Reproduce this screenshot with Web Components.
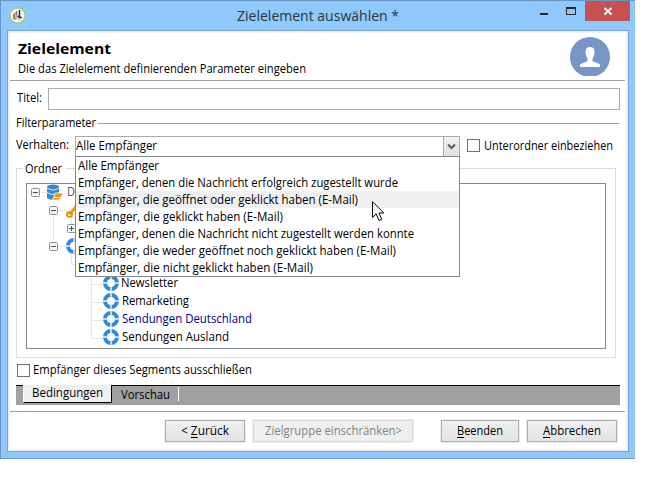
<!DOCTYPE html>
<html lang="de">
<head>
<meta charset="utf-8">
<title>Zielelement auswählen</title>
<style>
body{margin:0;background:#fff;font:12px/16px "Open Sans","Noto Sans",sans-serif;color:#000;overflow:hidden}
</style>
</head>
<body>
<wizard-window></wizard-window>
<script>
const define=(name,html,setup)=>{
  const t=document.createElement('template');t.innerHTML=html;
  customElements.define(name,class extends HTMLElement{
    connectedCallback(){
      if(this.shadowRoot)return;
      this.attachShadow({mode:'open'}).append(t.content.cloneNode(true));
      if(setup)setup(this,this.shadowRoot);
    }
  });
};

/* Text run condensed so that its advance equals the "w" attribute. */
define('fit-text',`<style>:host{display:block;flex:none;white-space:nowrap;height:16px}span{display:inline-block;white-space:pre;transform-origin:0 0}</style><span><slot></slot></span>`,(el,root)=>{
  const w=+el.getAttribute('w'),s=root.querySelector('span');
  el.style.width=w+'px';
  s.style.transform='scaleX('+w/s.getBoundingClientRect().width+')';
});

define('check-box',`<style>:host{display:flex;align-items:center;flex:none}i{box-sizing:border-box;width:13px;height:13px;border:1px solid #707070;background:#fff;margin-right:var(--gap,4px)}</style><i></i><slot></slot>`);

define('push-button',`<style>:host{display:block;flex:none;padding:1px;background:#f0f0f0}
button{all:unset;box-sizing:border-box;display:flex;justify-content:center;align-items:center;width:var(--w);height:22px;border:1px solid #acacac;background:linear-gradient(#f0f0f0,#e4e4e4)}
:host([disabled]) button{border-color:#d9d9d9;background:#efefef;color:#838383}</style><button><slot></slot></button>`);

define('ring-icon',`<style>:host{display:block;width:16px;height:16px}</style><svg width="16" height="16" style="display:block"><circle cx="8" cy="8" r="6" fill="none" stroke="#328ad6" stroke-width="4"/><path d="M8 0V4M8 12V16M0 8H4M12 8H16" stroke="#b6d7f1" stroke-width="2"/></svg>`);

define('tree-toggle',`<style>:host{display:block;width:9px;height:9px}</style><svg width="9" height="9" style="display:block"><rect x=".5" y=".5" width="8" height="8" rx="1" fill="#f5f5f5" stroke="#8f8f8f"/><path d="M2 4.5H7" stroke="#3b5580"/><path class="v" d="M4.500 2V7" stroke="#3b5580"/></svg>`,(el,r)=>{if(!el.hasAttribute('plus'))r.querySelector('.v').remove();});

define('title-bar',`<style>:host{display:grid;grid-template-columns:1fr auto 1fr;height:29px;color:#2b3640}
.logo{padding:6px 0 0 8px}fit-text{font-size:15px;line-height:20px;height:20px;padding-top:4px}
.ctl{display:flex;justify-content:flex-end;margin-right:5px}.close{background:#c75050;height:20px}svg{display:block}</style>
<div class="logo"><svg width="17" height="17"><circle cx="8.500" cy="8.500" r="7.600" fill="#f5f5ef" stroke="#a5bd4c"/><path d="M3.800 8L6 6V13L3.800 11.500Z" fill="#9b9b9b"/><path d="M6 5L8.500 3.500V12L6 13.500Z" fill="#b9b9b9"/><path d="M5.300 6V12.500M7.500 4.500V8.500" stroke="#777"/><path d="M10.500 3V10.500L8.500 9M10.500 10.500H13" fill="none" stroke="#333" stroke-width="1.500"/><path d="M9 12.500L12.500 11" stroke="#aaa"/></svg></div>
<fit-text w="162">Zielelement auswählen *</fit-text>
<div class="ctl"><svg width="52" height="20"><path d="M7 13H15" stroke="#2a2a2a" stroke-width="2"/><path d="M33 6H43V14H33ZM34 8V13H42V8Z" fill="#2a2a2a" fill-rule="evenodd"/></svg>
<div class="close"><svg width="45" height="20"><path d="M19.500 7L26.500 13.500M26.500 7L19.500 13.500" stroke="#fff" stroke-width="1.900"/></svg></div></div>`);

define('page-header',`<style>:host{display:flex;justify-content:space-between;height:47px;border-bottom:1px solid #a0a0a0;padding:0 15px 0 8px;margin-right:1px}
.t{padding-top:5px}.h{font-size:15px;font-weight:bold;line-height:20px;height:20px}svg{display:block;margin-top:4px}</style>
<div class="t"><fit-text class="h" w="93">Zielelement</fit-text><fit-text w="288" style="margin-top:3px">Die das Zielelement definierenden Parameter eingeben</fit-text></div>
<svg width="40" height="39"><circle cx="20" cy="20" r="20" fill="#7596c6"/><path d="M15.500 15C15.500 11.500 17 10 20 10S24.500 11.500 24.500 15C24.500 18 23.500 20 22.500 21.500V24C24 25.500 29.500 26 30 28V30H10V28C10.500 26 16 25.500 17.500 24V21.500C16.500 20 15.500 18 15.500 15Z" fill="#fff"/></svg>`);

define('combo-box',`<style>:host{display:flex;box-sizing:border-box;width:385px;height:21px;border:1px solid #aaa;position:relative;background:#fff;flex:none}
.v{flex:1;padding:1px 0 0 0}.b{width:15px;border-left:1px solid #aaa;background:linear-gradient(#f1f1f1,#e1e1e1);display:flex;align-items:center;justify-content:center}
.list{position:absolute;z-index:2;left:-1px;top:19px;width:383px;border:1px solid #828790;background:#fff}
.cursor{position:absolute;z-index:3;left:296px;top:64px}</style>
<div class="v"><slot name="value"></slot></div><div class="b"><svg width="9" height="7"><path d="M1 1.500L4.500 5L8 1.500" fill="none" stroke="#606060" stroke-width="2.200"/></svg></div>
<div class="list"><slot></slot></div>
<svg class="cursor" width="13" height="21"><path d="M.5 .7V16.500L4.200 12.900L7 19.500L9.700 18.300L7 12H11.800Z" fill="#fff" stroke="#000"/></svg>`);

define('list-option',`<style>:host{display:block;box-sizing:border-box;height:17px;padding:1px 0 0 2px}:host([active]){background:#f0f0f0}</style><slot></slot>`);

define('tree-row',`<style>:host{display:flex;align-items:center;height:18px;gap:var(--gap,3px);padding-left:var(--indent,76px)}</style><slot></slot>`);

define('folder-tree',`<style>:host{display:block;box-sizing:border-box;height:166px;border:1px solid #828790;background:#fff}
.body{display:grid}.lines,.rows{grid-area:1/1}.rows{margin-top:-1px}svg{display:block}</style>
<div class="body"><svg class="lines" width="120" height="164"><path d="M26.500 17V62M14 8.500H21M31 26.500H39M44.500 35V44M31 62.500H39M44.500 70V80.500H60M64.500 86V154.500M65 100.500H76M65 118.500H76M65 136.500H76M65 154.500H76" fill="none" stroke="#e7e7e7"/></svg>
<div class="rows">
<tree-row style="--indent:4px;--gap:3px"><tree-toggle></tree-toggle><svg width="17" height="17" style="margin-left:4px"><path d="M0 3V14Q6 18 12 14V3" fill="#328ad6"/><ellipse cx="6" cy="3" rx="6" ry="2.500" fill="#328ad6"/><path d="M0 4Q6 8 12 4M0 8.500Q6 12.500 12 8.500" fill="none" stroke="#d8eaf7"/><path d="M8 9H15Q17 10 15 11L12 16H6Q4 15 7 13Z" fill="#f4960d" stroke="#fff" stroke-width=".7"/><path d="M7 13.500H12" stroke="#fff"/></svg><fit-text w="8" style="color:#555">D</fit-text></tree-row>
<tree-row style="--indent:22px;--gap:8px"><tree-toggle></tree-toggle><svg width="16" height="16"><path d="M3 12.500L11 4" stroke="#f4960d" stroke-width="3"/><circle cx="3.500" cy="12.500" r="2.600" fill="none" stroke="#f4960d" stroke-width="2"/><circle cx="11.500" cy="4" r="3" fill="#f4960d"/></svg></tree-row>
<tree-row style="--indent:40px"><tree-toggle plus></tree-toggle></tree-row>
<tree-row style="--indent:22px;--gap:8px"><tree-toggle></tree-toggle><ring-icon></ring-icon></tree-row>
<tree-row style="height:19px"></tree-row>
<tree-row style="--gap:2px"><ring-icon></ring-icon><fit-text w="57">Newsletter</fit-text></tree-row>
<tree-row><ring-icon></ring-icon><fit-text w="67">Remarketing</fit-text></tree-row>
<tree-row><ring-icon></ring-icon><fit-text w="130" style="color:#00008b">Sendungen Deutschland</fit-text></tree-row>
<tree-row><ring-icon></ring-icon><fit-text w="107">Sendungen Ausland</fit-text></tree-row>
</div></div>`);

define('folder-group',`<style>:host{display:block;box-sizing:border-box;width:600px;height:190px;border:1px solid #dcdcdc;padding:0 9px}
.legend{background:#fff;width:fit-content;padding:0 4px 0 2px;margin:-8px 0 6px -3px;height:16px}</style><div class="legend"><fit-text w="37">Ordner</fit-text></div><slot></slot>`);

define('tab-strip',`<style>:host{display:flex;box-sizing:border-box;width:604px;height:20px;background:#a0a0a0;border-top:1px solid #000;padding-left:7px}
.a{box-sizing:border-box;width:89px;height:18px;margin-top:-1px;background:#f0f0f0;border-left:1px solid #fff;border-right:1px solid #000;border-bottom:1px solid #000;padding-left:8px}
.b{width:66px;height:14px;margin-top:1px;border-right:1px solid #fff;display:flex;padding-left:0}.b fit-text{margin:0 0 0 9px}</style>
<div class="a"><fit-text w="71">Bedingungen</fit-text></div><div class="b"><fit-text w="49">Vorschau</fit-text></div>`);

define('wizard-window',`<style>
:host{display:block;box-sizing:border-box;width:635px;height:459px;background:#8fc8fa;border:solid #6895c2;border-width:1px 0 1px 1px}
.frame{box-sizing:border-box;width:622px;height:422px;margin-left:6px;border:1px solid #75a5d2;background:#f0f0f0;padding:2px}
.page{height:416px;width:616px;background:#fff}
.row{display:flex}.input{box-sizing:border-box;width:572px;height:22px;border:1px solid #abadb3;background:#fff}
.body{padding-left:6px;height:330px}.rule{flex:1;height:1px;background:#a0a0a0;margin-top:8px}
.foot{display:flex;border-top:1px solid #a0a0a0;margin-right:1px;padding:7px 0 0 154px}
u{text-decoration:underline 1px;text-underline-offset:2px;text-decoration-skip-ink:none}
</style>
<title-bar></title-bar>
<div class="frame"><div class="page">
<page-header></page-header>
<div class="body">
<div class="row" style="padding-top:7px;height:22px"><fit-text w="25" style="margin:2px 6px 0 1px">Titel:</fit-text><div class="input"></div></div>
<div class="row" style="margin-top:5px;width:603px"><fit-text w="80" style="margin-right:2px">Filterparameter</fit-text><div class="rule"></div></div>
<div class="row" style="margin-top:5px"><fit-text w="53" style="margin:1px 6px 0 0">Verhalten:</fit-text>
<combo-box><fit-text slot="value" w="81">Alle Empfänger</fit-text>
<list-option><fit-text w="81">Alle Empfänger</fit-text></list-option>
<list-option><fit-text w="320">Empfänger, denen die Nachricht erfolgreich zugestellt wurde</fit-text></list-option>
<list-option active><fit-text w="280">Empfänger, die geöffnet oder geklickt haben (E-Mail)</fit-text></list-option>
<list-option><fit-text w="205">Empfänger, die geklickt haben (E-Mail)</fit-text></list-option>
<list-option><fit-text w="336">Empfänger, denen die Nachricht nicht zugestellt werden konnte</fit-text></list-option>
<list-option><fit-text w="318">Empfänger, die weder geöffnet noch geklickt haben (E-Mail)</fit-text></list-option>
<list-option><fit-text w="235">Empfänger, die nicht geklickt haben (E-Mail)</fit-text></list-option>
</combo-box>
<check-box style="margin-left:7px;height:19px"><fit-text w="129">Unterordner einbeziehen</fit-text></check-box></div>
<folder-group style="margin-top:11px"><folder-tree></folder-tree></folder-group>
<check-box style="--gap:3px;margin:4px 0 0 1px;height:16px"><fit-text w="219">Empfänger dieses Segments ausschließen</fit-text></check-box>
<tab-strip style="margin-top:7px"></tab-strip>
</div>
<div class="foot">
<push-button style="--w:80px"><fit-text w="48">&lt; <u>Z</u>urück</fit-text></push-button>
<push-button disabled style="--w:160px;margin-left:6px"><fit-text w="137">Zielgruppe einschränken&gt;</fit-text></push-button>
<push-button style="--w:78px;margin-left:26px"><fit-text w="46"><u>B</u>eenden</fit-text></push-button>
<push-button style="--w:90px;margin-left:6px"><fit-text w="58"><u>A</u>bbrechen</fit-text></push-button>
</div></div></div>`);
</script>
</body>
</html>
